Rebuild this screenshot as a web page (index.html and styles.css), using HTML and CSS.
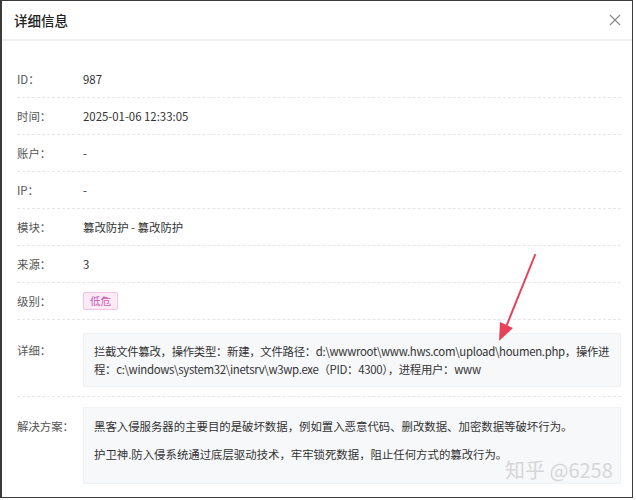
FILE: index.html
```html
<!DOCTYPE html>
<html lang="zh-CN">
  <head>
    <meta charset="UTF-8" />
    <meta name="viewport" content="width=device-width, initial-scale=1.0" />
    <title>详细信息</title>
    <link rel="stylesheet" href="styles.css">
  </head>
  <body>
    <div class="dialog">
      <div class="dialog-header">
        <span class="dialog-title">详细信息</span>
        <svg class="close-btn" width="12" height="12" viewBox="0 0 12 12">
          <path d="M1 1 L11 11 M11 1 L1 11" stroke="#8a8a8a" stroke-width="1.2" fill="none" />
        </svg>
      </div>
      <div class="dialog-body">
        <div class="row">
          <div class="label">ID：</div>
          <div class="value">987</div>
        </div>
        <div class="row">
          <div class="label">时间：</div>
          <div class="value">2025-01-06 12:33:05</div>
        </div>
        <div class="row">
          <div class="label">账户：</div>
          <div class="value">-</div>
        </div>
        <div class="row">
          <div class="label">IP：</div>
          <div class="value">-</div>
        </div>
        <div class="row">
          <div class="label">模块：</div>
          <div class="value">篡改防护 - 篡改防护</div>
        </div>
        <div class="row">
          <div class="label">来源：</div>
          <div class="value">3</div>
        </div>
        <div class="row">
          <div class="label">级别：</div>
          <div class="value"><span class="tag">低危</span></div>
        </div>
        <div class="row row-box">
          <div class="label">详细：</div>
          <div class="box box-detail">
            <p>拦截文件篡改，操作类型：新建，文件路径：d:\wwwroot\www.hws.com\upload\houmen.php，操作进程：c:\windows\system32\inetsrv\w3wp.exe（PID：4300），进程用户：www</p>
          </div>
        </div>
        <div class="row row-box last">
          <div class="label">解决方案：</div>
          <div class="box box-solution">
            <p>黑客入侵服务器的主要目的是破坏数据，例如置入恶意代码、删改数据、加密数据等破坏行为。</p>
            <p>护卫神.防入侵系统通过底层驱动技术，牢牢锁死数据，阻止任何方式的篡改行为。</p>
          </div>
        </div>
      </div>

      <!-- annotation arrow drawn over the screenshot -->
      <svg class="arrow" width="60" height="100" viewBox="0 0 60 100">
        <path d="M51 2 L22 74" stroke="#e8425a" stroke-width="2" fill="none" stroke-linecap="round" />
        <path d="M15 88 L16 69 L29 75 Z" fill="#e8425a" />
      </svg>
      <div class="watermark">知乎 @6258</div>
    </div>
  </body>
</html>
```

FILE: styles.css
```css
body {
  margin: 0;
  padding: 0;
  background-color: #fff;
  font-family: "Noto Sans CJK SC", "Liberation Sans", sans-serif;
}
.dialog {
  position: relative;
  width: 630px;
  height: 496px;
  border: 1px solid #3a3a3a;
  border-left-width: 2px;
  background-color: #fff;
  overflow: hidden;
}
.dialog-header {
  height: 38px;
  display: flex;
  align-items: center;
  justify-content: space-between;
  padding: 0 11px 0 12px;
  border-bottom: 2px solid #eeeeee;
}
.dialog-title {
  font-size: 13.5px;
  font-weight: 500;
  color: #222;
}
.close-btn {
  display: block;
}
.dialog-body {
  padding: 20px 11px 0 15px;
}
.row {
  display: flex;
  align-items: center;
  height: 36px;
  border-bottom: 1px dashed #e6e6e6;
  font-size: 11.4px;
}
.label {
  width: 66px;
  flex-shrink: 0;
  color: #555;
}
.value {
  color: #333;
}
.tag {
  display: inline-block;
  padding: 0 6px;
  line-height: 16px;
  font-size: 10.5px;
  color: #c659b4;
  background-color: #fcebf7;
  border: 1px solid #f0c4e4;
  border-radius: 2px;
}
.row-box {
  height: auto;
  align-items: flex-start;
  padding: 13px 0 9px;
}
.row-box .label {
  line-height: 18px;
  padding-top: 8px;
}
.row-box.last {
  border-bottom: none;
  padding-top: 10px;
}
.row-box.last .label {
  padding-top: 10px;
}
.box {
  flex: 1;
  background-color: #f7f8fa;
  border: 1px solid #f0f1f3;
  padding: 8px 10px;
  color: #333;
  line-height: 18px;
  word-break: break-all;
}
.box p {
  margin: 0;
}
.box-detail {
  letter-spacing: -0.3px;
}
.box-solution {
  padding: 9px 10px 10px;
}
.box-solution p {
  margin-bottom: 10px;
}
.arrow {
  position: absolute;
  left: 482px;
  top: 252px;
}
.watermark {
  position: absolute;
  left: 503px;
  top: 454px;
  font-size: 20px;
  color: #d6d6d6;
}
```
